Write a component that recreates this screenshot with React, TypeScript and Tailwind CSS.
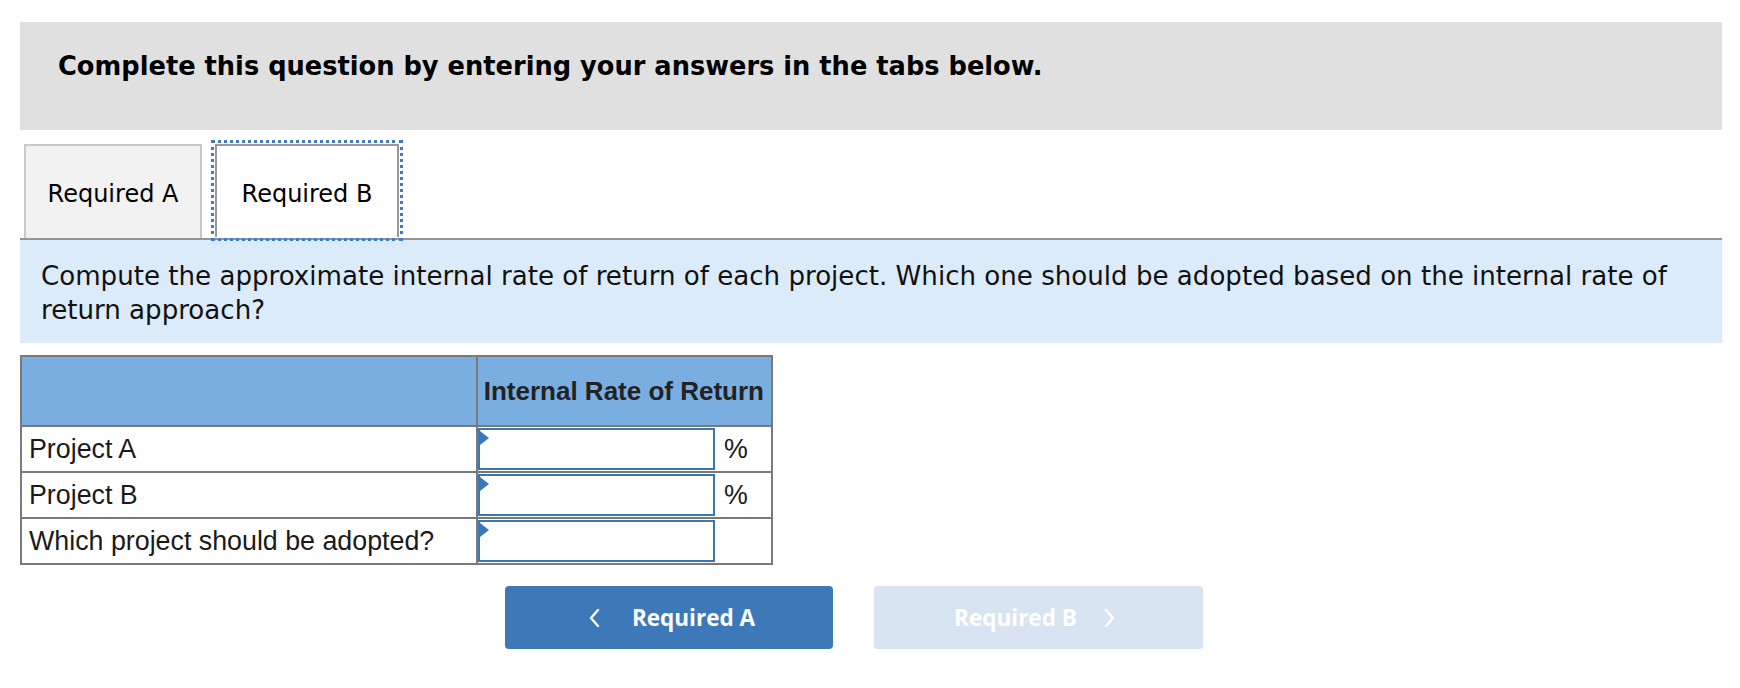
import React from "react";

const rows = [
  { label: "Project A", unit: "%" },
  { label: "Project B", unit: "%" },
  { label: "Which project should be adopted?", unit: "" },
];

function Chevron({ dir }: { dir: "left" | "right" }) {
  return (
    <svg width="11" height="18" viewBox="0 0 11 18" fill="none">
      <polyline
        points={dir === "left" ? "9,1 2,9 9,17" : "2,1 9,9 2,17"}
        stroke="white"
        strokeWidth="2.4"
        strokeLinecap="round"
        strokeLinejoin="round"
      />
    </svg>
  );
}

function AnswerInput() {
  return (
    <div className="relative h-full w-full border-2 border-[#3b77b7] bg-white">
      {/* little marker in the corner */}
      <span className="absolute left-0 top-[1px] h-0 w-0 border-y-[7px] border-l-[9px] border-y-transparent border-l-[#3b77b7]" />
    </div>
  );
}

export default function App() {
  return (
    <div className="w-[1740px] h-[688px] bg-white pl-[20px] pr-[18px] pt-[22px]">
      <div className="h-[108px] bg-[#e0e0e0] pl-[38px] pt-[24px]">
        <h1 className="font-['DejaVu_Sans',sans-serif] text-[25.7px] font-bold text-black leading-[40px]">
          Complete this question by entering your answers in the tabs below.
        </h1>
      </div>

      <div className="mt-[10px] flex items-end border-b-2 border-[#959595] pl-[4px] font-['DejaVu_Sans',sans-serif] text-[24px] text-black">
        <div className="flex h-[94px] w-[178px] items-center justify-center border-x-2 border-t-2 border-[#c8c8c8] bg-[#f2f2f2] pt-[4px]">
          Required A
        </div>
        <div className="relative -mb-[3px] ml-[9px] h-[101px] w-[192px] border-[3px] border-dotted border-[#3f7bc4] p-[1px]">
          <div className="flex h-full w-full items-center justify-center border-x-2 border-t-2 border-[#999] bg-white pt-[4px]">
            Required B
          </div>
        </div>
      </div>

      <div className="bg-[#dcebf9] pl-[21px] pt-[19px] pb-[16px] pr-[20px] font-['DejaVu_Sans',sans-serif] text-[26.1px] leading-[34px] text-[#111]">
        Compute the approximate internal rate of return of each project. Which one should be adopted based on the
        internal rate of return approach?
      </div>

      <table className="mt-[12px] w-[753px] border-collapse font-['Liberation_Sans',Arial,sans-serif] text-[26.8px] text-[#1a1a1a]">
        <thead>
          <tr className="h-[70px] bg-[#7aaee0]">
            <th className="w-[457px] border-2 border-[#7a7a7a]" />
            <th
              colSpan={2}
              className="border-2 border-[#7a7a7a] text-left pl-[6px] text-[26px] font-bold text-[#222]"
            >
              Internal Rate of Return
            </th>
          </tr>
        </thead>
        <tbody>
          {rows.map((r) => (
            <tr key={r.label} className="h-[46px]">
              <td className="border-2 border-[#7a7a7a] pl-[7px] leading-none">{r.label}</td>
              <td className="w-[239px] border-y-2 border-l-2 border-[#7a7a7a] p-0 py-[1px] h-[46px]">
                <AnswerInput />
              </td>
              <td className="w-[57px] border-y-2 border-r-2 border-[#7a7a7a] pl-[9px] leading-none">{r.unit}</td>
            </tr>
          ))}
        </tbody>
      </table>

      <div className="mt-[21px] ml-[485px] flex gap-[41px] font-['Open_Sans',sans-serif] text-[22.5px] font-bold text-white">
        <button className="flex h-[63px] w-[328px] items-center justify-center gap-[32px] rounded-[4px] bg-[#3d78b8] pl-[6px]">
          <Chevron dir="left" />
          <span>Required A</span>
        </button>
        <button className="flex h-[63px] w-[329px] items-center justify-center gap-[27px] rounded-[4px] bg-[#d8e4f1] pr-[8px]">
          <span>Required B</span>
          <Chevron dir="right" />
        </button>
      </div>
    </div>
  );
}
